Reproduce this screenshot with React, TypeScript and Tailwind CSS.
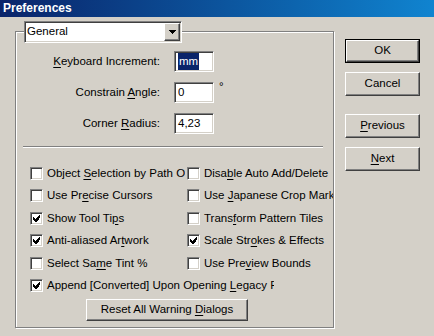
import React from 'react';

const raised =
  'border border-t-white border-l-white border-r-[#404040] border-b-[#404040] shadow-[inset_-1px_-1px_0_#808080]';
const sunken =
  'border border-t-[#808080] border-l-[#808080] border-r-white border-b-white shadow-[inset_1px_1px_0_#404040,inset_-1px_-1px_0_#d4d0c8]';

function U({ children }: { children: React.ReactNode }) {
  return <span className="underline underline-offset-[2px]">{children}</span>;
}

function CheckBox({ checked }: { checked?: boolean }) {
  return (
    <div className={`w-[13px] h-[13px] shrink-0 bg-white flex items-center justify-center ${sunken}`}>
      {checked && (
        <svg width="7" height="7" viewBox="0 0 7 7" shapeRendering="crispEdges">
          <path d="M6 0h1v3h-1zM5 1h1v4h-1zM4 2h1v4h-1zM3 3h1v4h-1zM2 4h1v3h-1zM1 3h1v3h-1zM0 2h1v3h-1z" fill="#000" />
        </svg>
      )}
    </div>
  );
}

function Check({ checked, children }: { checked?: boolean; children: React.ReactNode }) {
  return (
    <div className="flex items-center gap-[4px] whitespace-nowrap overflow-hidden">
      <CheckBox checked={checked} />
      <span>{children}</span>
    </div>
  );
}

function Btn({ children, isDefault }: { children: React.ReactNode; isDefault?: boolean }) {
  if (isDefault) {
    return (
      <div className="w-[75px] h-[24px] border border-black">
        <div className={`w-full h-full flex items-center justify-center ${raised}`}>
          <span>{children}</span>
        </div>
      </div>
    );
  }
  return (
    <div className={`w-[75px] h-[24px] flex items-center justify-center ${raised}`}>
      <span>{children}</span>
    </div>
  );
}

export default function App() {
  const rows: [boolean, React.ReactNode, boolean, React.ReactNode][] = [
    [false, <>Object <U>S</U>election by Path Only</>, false, <>Disa<U>b</U>le Auto Add/Delete</>],
    [false, <>Use Pr<U>e</U>cise Cursors</>, false, <>Use <U>J</U>apanese Crop Marks</>],
    [true, <>Show Tool Ti<U>p</U>s</>, false, <>Trans<U>f</U>orm Pattern Tiles</>],
    [true, <>Anti-aliased Ar<U>t</U>work</>, true, <>Scale Str<U>o</U>kes &amp; Effects</>],
    [false, <>Select Sa<U>m</U>e Tint %</>, false, <>Use Pre<U>v</U>iew Bounds</>],
  ];

  return (
    <div className="w-[434px] h-[336px] bg-[#d4d0c8] overflow-hidden text-[11.5px] text-black font-['Liberation_Sans',Arial,sans-serif]">
      {/* Title bar */}
      <div className="h-[17px] bg-gradient-to-r from-[#0a246a] to-[#1084d0] text-white font-bold text-[12px] leading-[17px] pl-[3px]">
        Preferences
      </div>

      <div className="flex">
        {/* Group box */}
        <div className="ml-[15px] mt-[14px] w-[319px] h-[297px] border border-[#808080] shadow-[inset_1px_1px_0_#fff,1px_1px_0_#fff] flex flex-col">
          {/* Dropdown */}
          <div className={`ml-[8px] -mt-[11px] w-[158px] h-[22px] bg-white flex items-center ${sunken}`}>
            <div className="flex-1 pl-[2px]">General</div>
            <div className={`w-[16px] h-[18px] mr-[1px] bg-[#d4d0c8] flex items-center justify-center ${raised}`}>
              <svg width="7" height="4" viewBox="0 0 7 4" shapeRendering="crispEdges">
                <path d="M0 0h7v1h-7zM1 1h5v1h-5zM2 2h3v1h-3zM3 3h1v1h-1z" fill="#000" />
              </svg>
            </div>
          </div>

          {/* Numeric fields */}
          <div className="mt-[8px] flex flex-col gap-[10px]">
            {[
              [<><U>K</U>eyboard Increment:</>, 'mm', false],
              [<>Constrain <U>A</U>ngle:</>, '0', true],
              [<>Corner <U>R</U>adius:</>, '4,23', false],
            ].map(([label, value, deg], i) => (
              <div key={i} className="flex items-center h-[21px]">
                <div className="w-[144px] text-right">{label}</div>
                <div className={`ml-[14px] w-[40px] h-[21px] bg-white flex items-center pl-[3px] ${sunken}`}>
                  {i === 0 ? (
                    <span className="bg-[#0a246a] text-white px-[1px]">{value as string}</span>
                  ) : (
                    <span>{value as string}</span>
                  )}
                </div>
                {deg && <span className="ml-[5px] self-start -mt-[4px]">°</span>}
              </div>
            ))}
          </div>

          {/* Separator */}
          <div className="mt-[12px] ml-[7px] w-[300px] h-[2px] border-t border-[#808080] border-b border-b-white" />

          {/* Check boxes */}
          <div className="mt-[14px] ml-[14px] flex flex-col">
            {rows.map(([lc, lt, rc, rt], i) => (
              <div key={i} className="h-[22.5px] flex items-center">
                <div className="w-[155px] overflow-hidden">
                  <Check checked={lc}>{lt}</Check>
                </div>
                <div className="ml-[2px] w-[146px] overflow-hidden">
                  <Check checked={rc}>{rt}</Check>
                </div>
              </div>
            ))}
            <div className="h-[22.5px] flex items-center">
              <div className="w-[244px] overflow-hidden">
                <Check checked>
                  Append [Converted] Upon Opening <U>L</U>egacy Files
                </Check>
              </div>
            </div>
          </div>

          {/* Reset button */}
          <div className={`mt-[2px] ml-[70px] w-[162px] h-[22px] flex items-center justify-center ${raised}`}>
            <span>
              Reset All Warning <U>D</U>ialogs
            </span>
          </div>
        </div>

        {/* Buttons */}
        <div className="ml-[11px] mt-[22px] flex flex-col">
          <Btn isDefault>OK</Btn>
          <div className="mt-[9px]">
            <Btn>Cancel</Btn>
          </div>
          <div className="mt-[18px]">
            <Btn>
              <U>P</U>revious
            </Btn>
          </div>
          <div className="mt-[9px]">
            <Btn>
              <U>N</U>ext
            </Btn>
          </div>
        </div>
      </div>
    </div>
  );
}
